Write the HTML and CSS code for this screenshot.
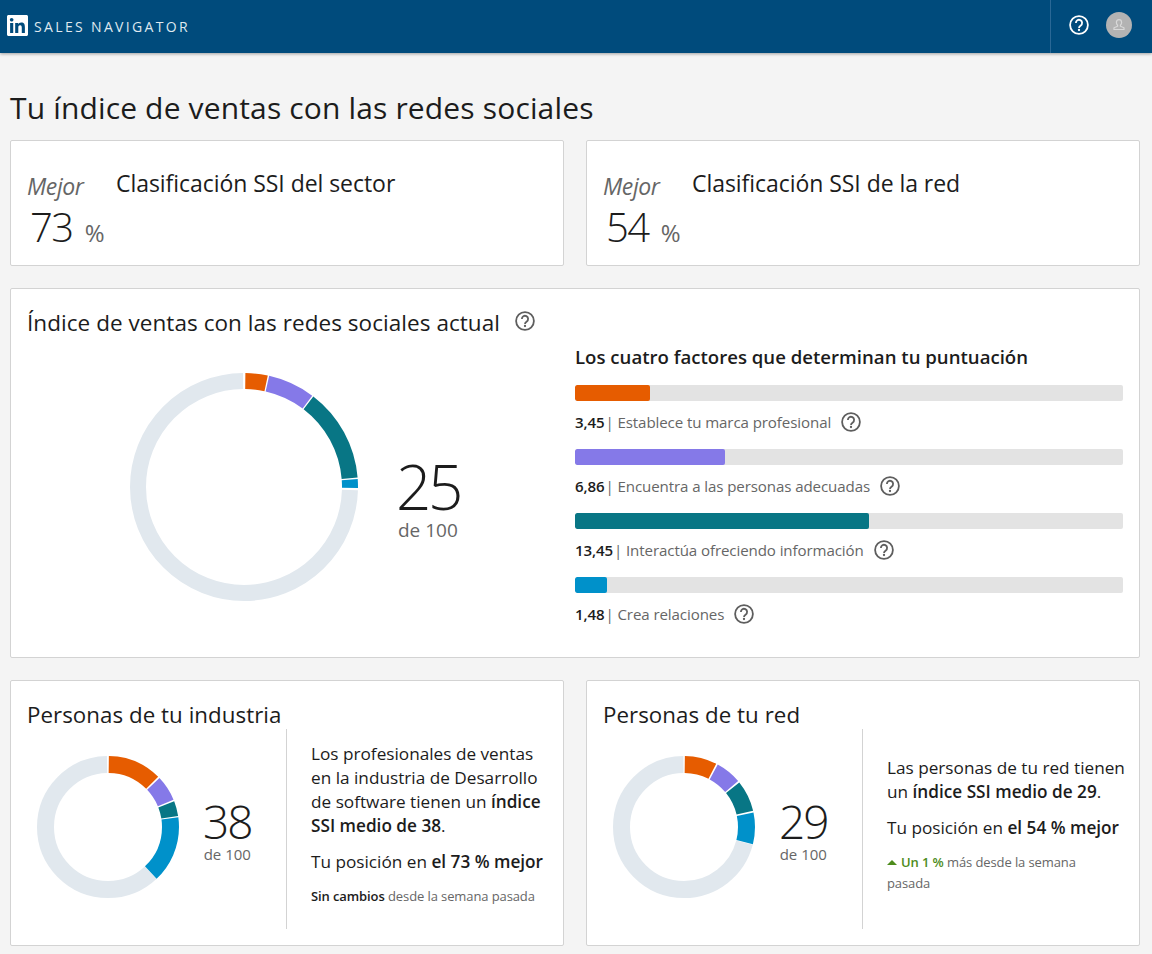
FILE: index.html
```html
<!DOCTYPE html>
<html lang="es">
<head>
<meta charset="utf-8">
<title>Sales Navigator</title>
<link rel="stylesheet" href="styles.css">
</head>
<body>
<svg class="defs" width="0" height="0" aria-hidden="true">
  <symbol id="help" viewBox="0 0 20 20">
    <circle cx="10" cy="10" r="8.9" fill="none" stroke="currentColor" stroke-width="1.8"/>
    <path d="M6.9 7.9a3.1 3.1 0 1 1 4.9 2.5c-1.2.8-1.8 1.2-1.8 2.5" fill="none" stroke="currentColor" stroke-width="1.8"/>
    <circle cx="10" cy="15" r="1.15" fill="currentColor"/>
  </symbol>
</svg>
<header class="topbar">
  <div class="brand">
    <svg class="logo" viewBox="0 0 24 24"><path fill="#fff" d="M20.447 20.452h-3.554v-5.569c0-1.328-.027-3.037-1.852-3.037-1.853 0-2.136 1.445-2.136 2.939v5.667H9.351V9h3.414v1.561h.046c.477-.9 1.637-1.85 3.37-1.85 3.601 0 4.267 2.37 4.267 5.455v6.286zM5.337 7.433c-1.144 0-2.063-.926-2.063-2.065 0-1.138.92-2.063 2.063-2.063 1.14 0 2.064.925 2.064 2.063 0 1.139-.925 2.065-2.064 2.065zm1.782 13.019H3.555V9h3.564v11.452zM22.225 0H1.771C.792 0 0 .774 0 1.729v20.542C0 23.227.792 24 1.771 24h20.451C23.2 24 24 23.227 24 22.271V1.729C24 .774 23.2 0 22.222 0h.003z"/></svg>
    <span class="brand-name">SALES NAVIGATOR</span>
  </div>
  <div class="top-actions">
    <svg class="top-help"><use href="#help"/></svg>
    <span class="avatar">
      <svg viewBox="0 0 26 26" width="26" height="26"><path d="M13 7.600c1.600 0 2.600 1.200 2.600 2.800 0 1.200-.5 2.200-1.200 2.800v1l3.600 1.600v1.700H8v-1.700l3.600-1.600v-1c-.7-.6-1.200-1.600-1.200-2.800 0-1.600 1-2.800 2.600-2.800z" fill="none" stroke="#d9d9d9" stroke-width="1.200"/></svg>
    </span>
  </div>
</header>
<main class="page">
  <h1 class="page-title">Tu índice de ventas con las redes sociales</h1>
  <div class="grid">
    <section class="card rank">
      <div class="rank-score">
        <div class="rank-label">Mejor</div>
        <div class="rank-value">73<span class="rank-unit">%</span></div>
      </div>
      <h2 class="rank-title">Clasificación SSI del sector</h2>
    </section>
    <section class="card rank">
      <div class="rank-score">
        <div class="rank-label">Mejor</div>
        <div class="rank-value">54<span class="rank-unit">%</span></div>
      </div>
      <h2 class="rank-title">Clasificación SSI de la red</h2>
    </section>

    <section class="card current">
      <div class="current-head">
        <h2 class="card-title">Índice de ventas con las redes sociales actual</h2>
        <svg class="help"><use href="#help"/></svg>
      </div>
      <div class="current-body">
        <div class="current-left">
          <svg class="donut-lg" viewBox="0 0 228 228">
            <g transform="rotate(-90 114 114)" fill="none" stroke-width="16">
              <circle class="ring" cx="114" cy="114" r="106" pathLength="100" stroke-dasharray="74.4 25.6" stroke-dashoffset="-25.45"/>
              <circle class="s-orange" cx="114" cy="114" r="106" pathLength="100" stroke-dasharray="3.15 96.85" stroke-dashoffset="-.2"/>
              <circle class="s-purple" cx="114" cy="114" r="106" pathLength="100" stroke-dasharray="6.66 93.34" stroke-dashoffset="-3.55"/>
              <circle class="s-teal" cx="114" cy="114" r="106" pathLength="100" stroke-dasharray="13.25 86.75" stroke-dashoffset="-10.41"/>
              <circle class="s-blue" cx="114" cy="114" r="106" pathLength="100" stroke-dasharray="1.28 98.72" stroke-dashoffset="-23.86"/>
            </g>
          </svg>
          <div class="score score-lg"><span class="score-num">25</span><span class="score-of">de 100</span></div>
        </div>
        <div class="current-right">
          <h3 class="factors-title">Los cuatro factores que determinan tu puntuación</h3>
          <div class="factor">
            <div class="bar"><div class="fill s-bg-orange" style="width:75px"></div></div>
            <div class="factor-label"><b>3,45</b> | Establece tu marca profesional<svg class="help"><use href="#help"/></svg></div>
          </div>
          <div class="factor">
            <div class="bar"><div class="fill s-bg-purple" style="width:150px"></div></div>
            <div class="factor-label"><b>6,86</b> | Encuentra a las personas adecuadas<svg class="help"><use href="#help"/></svg></div>
          </div>
          <div class="factor">
            <div class="bar"><div class="fill s-bg-teal" style="width:294px"></div></div>
            <div class="factor-label"><b>13,45</b> | Interactúa ofreciendo información<svg class="help"><use href="#help"/></svg></div>
          </div>
          <div class="factor">
            <div class="bar"><div class="fill s-bg-blue" style="width:32px"></div></div>
            <div class="factor-label"><b>1,48</b> | Crea relaciones<svg class="help"><use href="#help"/></svg></div>
          </div>
        </div>
      </div>
    </section>

    <section class="card people">
      <h2 class="card-title">Personas de tu industria</h2>
      <div class="people-body">
        <div class="people-left">
          <svg class="donut-sm" viewBox="0 0 142 142">
            <g transform="rotate(-90 71 71)" fill="none" stroke-width="17">
              <circle class="ring" cx="71" cy="71" r="62.5" pathLength="100" stroke-dasharray="61.7 38.3" stroke-dashoffset="-38.05"/>
              <circle class="s-orange" cx="71" cy="71" r="62.5" pathLength="100" stroke-dasharray="12.3 87.7" stroke-dashoffset="-.2"/>
              <circle class="s-purple" cx="71" cy="71" r="62.5" pathLength="100" stroke-dasharray="5.8 94.2" stroke-dashoffset="-12.9"/>
              <circle class="s-teal" cx="71" cy="71" r="62.5" pathLength="100" stroke-dasharray="3.4 96.6" stroke-dashoffset="-19.1"/>
              <circle class="s-blue" cx="71" cy="71" r="62.5" pathLength="100" stroke-dasharray="15.2 84.8" stroke-dashoffset="-22.8"/>
            </g>
          </svg>
          <div class="score"><span class="score-num">38</span><span class="score-of">de 100</span></div>
        </div>
        <div class="people-text">
          <p class="para">Los profesionales de ventas en la industria de Desarrollo de software tienen un <b>índice SSI medio de 38</b>.</p>
          <p class="para">Tu posición en <b>el 73 % mejor</b></p>
          <p class="note"><b>Sin cambios</b> desde la semana pasada</p>
        </div>
      </div>
    </section>
    <section class="card people">
      <h2 class="card-title">Personas de tu red</h2>
      <div class="people-body">
        <div class="people-left">
          <svg class="donut-sm" viewBox="0 0 142 142">
            <g transform="rotate(-90 71 71)" fill="none" stroke-width="17">
              <circle class="ring" cx="71" cy="71" r="62.5" pathLength="100" stroke-dasharray="70.8 29.2" stroke-dashoffset="-29.05"/>
              <circle class="s-orange" cx="71" cy="71" r="62.5" pathLength="100" stroke-dasharray="7.3 92.7" stroke-dashoffset="-.2"/>
              <circle class="s-purple" cx="71" cy="71" r="62.5" pathLength="100" stroke-dasharray="5.9 94.1" stroke-dashoffset="-7.9"/>
              <circle class="s-teal" cx="71" cy="71" r="62.5" pathLength="100" stroke-dasharray="7.1 92.9" stroke-dashoffset="-14.2"/>
              <circle class="s-blue" cx="71" cy="71" r="62.5" pathLength="100" stroke-dasharray="7.2 92.8" stroke-dashoffset="-21.7"/>
            </g>
          </svg>
          <div class="score"><span class="score-num">29</span><span class="score-of">de 100</span></div>
        </div>
        <div class="people-text">
          <p class="para">Las personas de tu red tienen un <b>índice SSI medio de 29</b>.</p>
          <p class="para">Tu posición en <b>el 54 % mejor</b></p>
          <p class="note"><span class="up"><span class="arrow"></span>Un 1 %</span> más desde la semana pasada</p>
        </div>
      </div>
    </section>
  </div>
</main>
</body>
</html>
```

FILE: styles.css
```css
* { box-sizing: border-box; }
html, body { margin: 0; padding: 0; }
body {
  background: #f4f4f4;
  color: #1c1c1c;
  font-family: "Open Sans", "Noto Sans", sans-serif;
  overflow: hidden;
}
h1, h2, h3, p { margin: 0; font-weight: 400; }
b { font-weight: 600; }
.defs { position: absolute; }

.topbar {
  height: 53px;
  background: #004b7c;
  box-shadow: 0 1px 3px rgba(0,0,0,.35);
  display: flex;
  justify-content: space-between;
  align-items: stretch;
}
.brand { display: flex; align-items: center; padding-left: 7px; gap: 6px; padding-bottom: 2px; }
.logo { width: 21px; height: 21px; }
.brand-name { font-size: 14px; letter-spacing: 2.35px; color: #dfe8ef; margin-top: 1px; }
.top-actions {
  width: 102px;
  border-left: 1px solid #2a6896;
  display: flex;
  align-items: center;
  padding-left: 18px;
  padding-bottom: 3px;
  gap: 17px;
}
.top-help { width: 20px; height: 20px; color: #fff; }
.avatar { width: 26px; height: 26px; border-radius: 50%; background: #b3b3b3; display: block; }
.avatar svg { display: block; }

.page { padding: 0 12px 8px 10px; }
.page-title { font-size: 30px; line-height: 40px; padding-top: 35px; height: 87px; letter-spacing: .15px; }
.grid { display: grid; grid-template-columns: 554px 554px; column-gap: 22px; row-gap: 22px; }
.card { background: #fff; border: 1px solid #d3d3d3; border-radius: 2px; }

.rank { height: 126px; display: flex; padding: 27px 16px 0; }
.rank-score { width: 89px; padding-top: 3px; }
.rank-label { font-size: 23px; line-height: 30px; font-style: italic; color: #666; letter-spacing: -.4px; }
.rank-value { font-size: 40px; line-height: 52px; padding-left: 3px; letter-spacing: -1.5px; font-weight: 300; }
.rank-unit { font-size: 24px; color: #666; margin-left: 12px; font-weight: 400; letter-spacing: 0; }
.rank-title { font-size: 23px; line-height: 30px; letter-spacing: -.05px; }

.current { grid-column: 1 / 3; height: 370px; padding: 16px 16px 0; }
.current-head { display: flex; align-items: center; height: 36px; }
.card-title { font-size: 22.5px; line-height: 36px; letter-spacing: .05px; }
.help { width: 20px; height: 20px; color: #5e5e5e; margin-left: 10px; flex: none; }
.current-head .help { margin-left: 15px; margin-bottom: 4px; }
.current-body { display: flex; }
.current-left { width: 548px; padding: 32px 0 0 103px; display: flex; align-items: center; align-self: flex-start; }
.donut-lg { width: 228px; height: 228px; display: block; flex: none; }
.ring { stroke: #e1e8ee; }
.s-orange { stroke: #e65c00; }
.s-purple { stroke: #8579e8; }
.s-teal { stroke: #087685; }
.s-blue { stroke: #0091ca; }
.s-bg-orange { background: #e65c00; }
.s-bg-purple { background: #8579e8; }
.s-bg-teal { background: #087685; }
.s-bg-blue { background: #0091ca; }

.score { display: flex; flex-direction: column; align-items: center; margin-left: 24px; }
.score-num { font-size: 46px; line-height: 60px; font-weight: 300; letter-spacing: -2px; }
.score-of { font-size: 15px; line-height: 20px; color: #666; margin-top: -7px; }
.score-lg { margin-left: 38px; margin-top: 16px; }
.score-lg .score-num { font-size: 62px; line-height: 76px; letter-spacing: -3.5px; }
.score-lg .score-of { font-size: 19px; line-height: 26px; margin-top: -7px; }

.current-right { width: 548px; }
.factors-title { font-size: 18.6px; line-height: 32px; font-weight: 600; margin-bottom: 12px; }
.factor { height: 64px; }
.bar { height: 16px; background: #e3e3e3; border-radius: 2px; overflow: hidden; }
.fill { height: 100%; border-radius: 2px; }
.factor-label { display: flex; align-items: center; white-space: pre-wrap; height: 26px; margin-top: 8px; font-size: 15.1px; color: #666; letter-spacing: -.1px; }
.factor-label b { color: #1c1c1c; margin-right: -3px; }

.people { height: 266px; padding: 16px 13px 0 16px; }
.people .card-title { height: 32px; font-size: 22.3px; }
.people-body { display: flex; height: 200px; }
.people-left { width: 260px; flex: none; border-right: 1px solid #d3d3d3; padding: 27px 0 0 10px; display: flex; align-items: flex-start; }
.donut-sm { width: 142px; height: 142px; display: block; flex: none; }
.people-left .score { margin-top: 35px; }
.people-text { flex: 1; padding-left: 24px; display: flex; flex-direction: column; justify-content: center; padding-bottom: 9px; font-size: 17.2px; }
.para { line-height: 24px; margin-bottom: 12px; }
.note { font-size: 13px; line-height: 21px; color: #666; letter-spacing: -.1px; max-width: 232px; }
.note b { color: #1c1c1c; }
.up { color: #4d8c1c; font-weight: 600; }
.arrow { display: inline-block; width: 0; height: 0; border-left: 5px solid transparent; border-right: 5px solid transparent; border-bottom: 5px solid #4d8c1c; margin-right: 4px; vertical-align: 2px; }
```
